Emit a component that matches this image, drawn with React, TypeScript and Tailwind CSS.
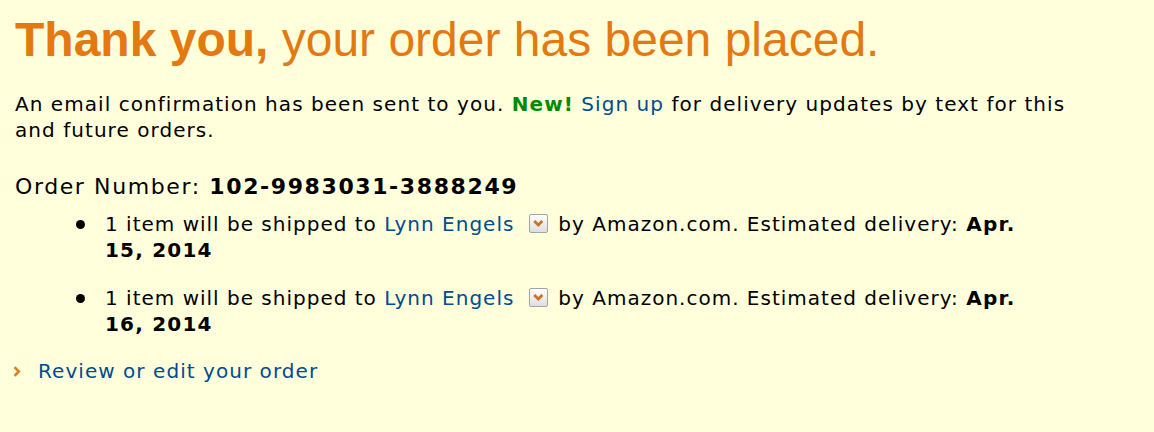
import React from "react";

const Chooser = () => (
  <span className="inline-block align-[-2px] w-[19px] h-[19px] ml-[15px] mr-[10px] border border-[#a4a4a4] rounded-[2px] bg-gradient-to-b from-[#ffffff] to-[#dedede]">
    <svg viewBox="0 0 16 16" className="w-full h-full">
      <path d="M4 5.6 L7.8 9.4 L11.6 5.6" fill="none" stroke="#c8731f" strokeWidth="2.6" />
    </svg>
  </span>
);

const Shipment = ({ date }: { date: string }) => (
  <li className="flex">
    <span className="w-[30px] shrink-0 pt-[9px]">
      <span className="block w-[9px] h-[9px] ml-[1px] rounded-full bg-black" />
    </span>
    <span>
      1 item will be shipped to{" "}
      <a className="text-[#004b91]" href="#">
        Lynn Engels
      </a>
      <Chooser />
      by Amazon.com. Estimated delivery: <b className="tracking-[1.2px]">Apr. {date}</b>
    </span>
  </li>
);

const App = () => {
  return (
    <div
      className="min-h-screen bg-[#ffffdc] text-black pl-[15px] pt-[12px]"
      style={{ fontFamily: "Verdana, 'DejaVu Sans', sans-serif" }}
    >
      <h1
        className="text-[48px] leading-[56px] text-[#e47911] font-normal"
        style={{ fontFamily: "Arial, 'Liberation Sans', sans-serif" }}
      >
        <b>Thank you,</b> your order has been placed.
      </h1>

      <p className="mt-[23px] w-[1085px] text-[20px] leading-[26px] tracking-[1.05px]">
        An email confirmation has been sent to you.{" "}
        <b className="text-[#008a00]">New!</b>{" "}
        <a className="text-[#004b91]" href="#">
          Sign up
        </a>{" "}
        for delivery updates by text for this and future orders.
      </p>

      <div className="mt-[30px] text-[22px] leading-[28px] tracking-[1.6px]">
        Order Number: <b>102-9983031-3888249</b>
      </div>

      <ul className="mt-[10px] ml-[60px] w-[975px] text-[20px] leading-[26px] tracking-[1px] flex flex-col gap-[22px]">
        <Shipment date="15, 2014" />
        <Shipment date="16, 2014" />
      </ul>

      <div className="mt-[21px] flex items-center text-[20px] leading-[26px] tracking-[1.05px]">
        <svg viewBox="0 0 8 11" className="w-[8px] h-[11px] -ml-[2px] mr-[17px]">
          <path d="M1.5 1.2 L5.8 5.5 L1.5 9.8" fill="none" stroke="#d9822b" strokeWidth="2.6" />
        </svg>
        <a className="text-[#004b91]" href="#">
          Review or edit your order
        </a>
      </div>
    </div>
  );
};

export default App;
